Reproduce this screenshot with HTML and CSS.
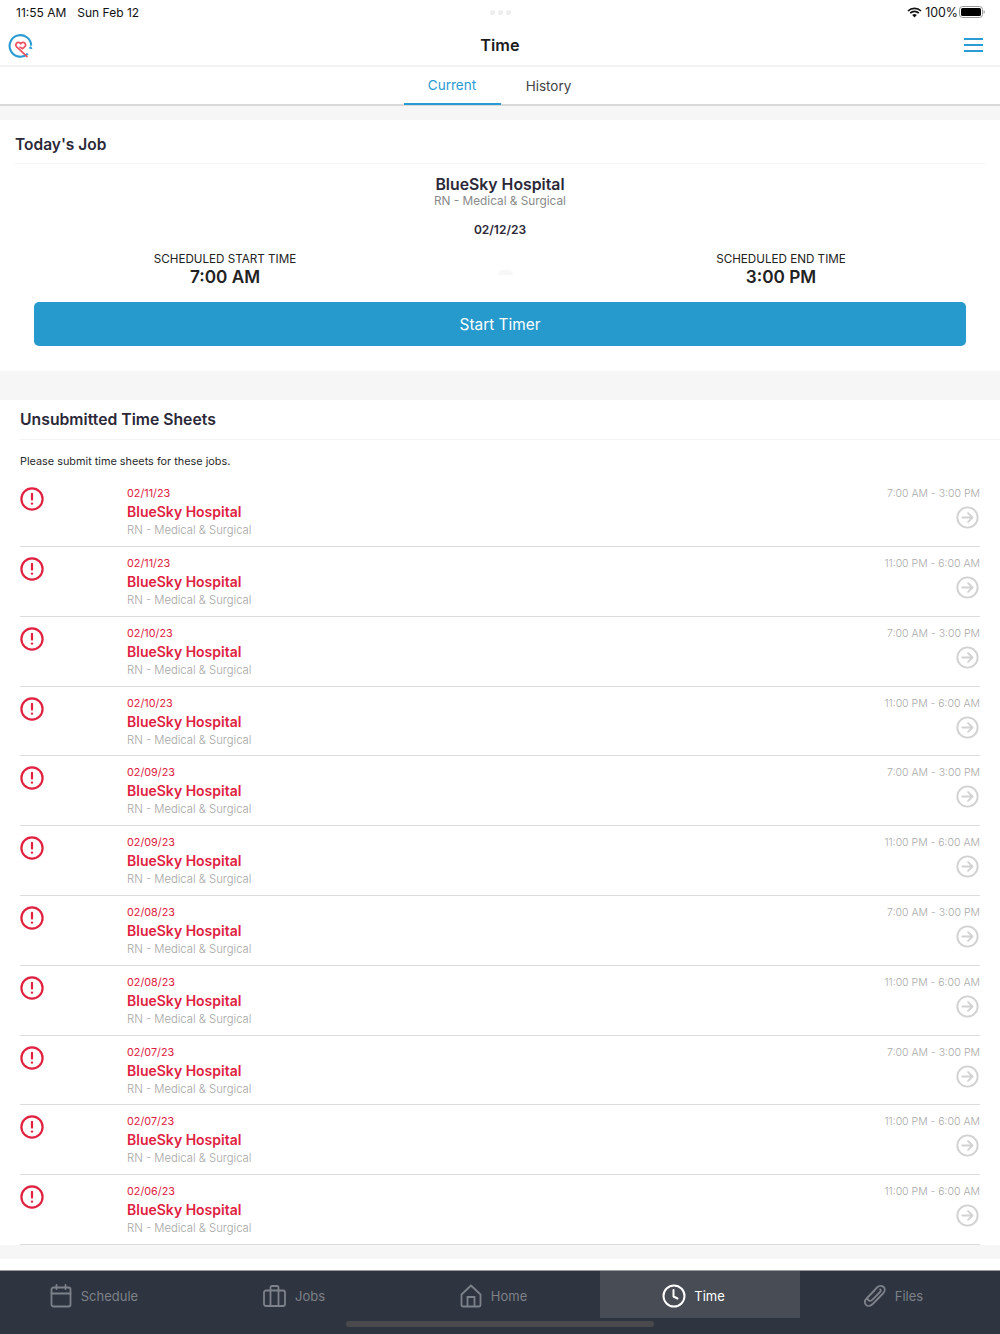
FILE: index.html
```html
<!DOCTYPE html>
<html lang="en">
<head>
<meta charset="utf-8">
<title>Time</title>
<link rel="stylesheet" href="styles.css">
</head>
<body>
<svg class="defs" width="0" height="0" aria-hidden="true">
  <symbol id="alert" viewBox="0 0 24 24"><circle cx="12" cy="12" r="10.6" fill="none" stroke="currentColor" stroke-width="2.2"/><path d="M12 6.8v5.8" fill="none" stroke="currentColor" stroke-width="2.2" stroke-linecap="round"/><circle cx="12" cy="16.6" r="1.2" fill="currentColor"/></symbol>
  <symbol id="go" viewBox="0 0 24 24"><circle cx="12" cy="12" r="10.6" fill="none" stroke="currentColor" stroke-width="2"/><path d="M6.6 12h10.4M12.6 7.4l4.6 4.6-4.6 4.6" fill="none" stroke="currentColor" stroke-width="2" stroke-linecap="round" stroke-linejoin="round"/></symbol>
</svg>
<div class="app">
  <div class="status">
    <div class="status-left"><span>11:55 AM</span><span>Sun Feb 12</span></div>
    <div class="dots"><i></i><i></i><i></i></div>
    <div class="status-right">
      <svg class="wifi" width="15" height="11" viewBox="0 0 15 11"><path d="M1 4a9.2 9.2 0 0 1 13 0M3.2 6.2a6 6 0 0 1 8.6 0" fill="none" stroke="#111" stroke-width="1.7"/><path d="M5.2 8.1a3.2 3.2 0 0 1 4.6 0L7.5 10.6z" fill="#111"/></svg>
      <span class="pct">100%</span>
      <svg width="26" height="12" viewBox="0 0 26 12"><rect x=".5" y=".5" width="23" height="11" rx="3" fill="none" stroke="#999"/><rect x="2" y="2" width="20" height="8" rx="1.6" fill="#000"/><path d="M24.6 4.2c.8.2 1.200.9 1.200 1.800s-.4 1.600-1.200 1.800z" fill="#999"/></svg>
    </div>
  </div>
  <header class="nav">
    <svg class="logo" width="25" height="25" viewBox="0 0 25 25"><path d="M19.800 20.800A10.800 10.800 0 1 1 23.200 12.600" fill="none" stroke="#2b9bd3" stroke-width="2.100"/><path d="M20.300 15.200l2.700-2.200 1.500 3.200z" fill="#2b9bd3"/><path d="M19 23.600l-6.800-6.400-3.600-3.300c-1.700-2-.4-4.500 1.700-4.500 1.100 0 1.900.6 2.400 1.400.5-.8 1.300-1.400 2.400-1.400 2.200 0 3.300 2.600 1.800 4.300l-2.400 2-2.400-1.600" fill="none" stroke="#ef4f5f" stroke-width="1.700" stroke-linecap="round" stroke-linejoin="round"/></svg>
    <h1>Time</h1>
    <div class="burger"><i></i><i></i><i></i></div>
  </header>
  <nav class="tabs">
    <div class="tab active">Current</div>
    <div class="tab">History</div>
  </nav>
  <main>
    <section class="card today">
      <h2 class="title today-title">Today's Job</h2>
      <div class="job">
        <div class="job-name">BlueSky Hospital</div>
        <div class="job-role">RN - Medical &amp; Surgical</div>
        <div class="job-date">02/12/23</div>
      </div>
      <div class="sched">
        <div class="sched-col"><div class="sched-label">SCHEDULED START TIME</div><div class="sched-time">7:00 AM</div></div>
        <div class="sched-mark"></div>
        <div class="sched-col"><div class="sched-label">SCHEDULED END TIME</div><div class="sched-time">3:00 PM</div></div>
      </div>
      <button class="start">Start Timer</button>
    </section>
    <section class="card sheets">
      <h2 class="title sheets-title">Unsubmitted Time Sheets</h2>
      <p class="hint">Please submit time sheets for these jobs.</p>
      <ul class="rows">
        <li class="row"><svg class="alert"><use href="#alert"/></svg><div class="info"><div class="date">02/11/23</div><div class="name">BlueSky Hospital</div><div class="role">RN - Medical &amp; Surgical</div></div><div class="right"><div class="hours">7:00 AM - 3:00 PM</div><svg class="go"><use href="#go"/></svg></div></li>
        <li class="row"><svg class="alert"><use href="#alert"/></svg><div class="info"><div class="date">02/11/23</div><div class="name">BlueSky Hospital</div><div class="role">RN - Medical &amp; Surgical</div></div><div class="right"><div class="hours">11:00 PM - 6:00 AM</div><svg class="go"><use href="#go"/></svg></div></li>
        <li class="row"><svg class="alert"><use href="#alert"/></svg><div class="info"><div class="date">02/10/23</div><div class="name">BlueSky Hospital</div><div class="role">RN - Medical &amp; Surgical</div></div><div class="right"><div class="hours">7:00 AM - 3:00 PM</div><svg class="go"><use href="#go"/></svg></div></li>
        <li class="row"><svg class="alert"><use href="#alert"/></svg><div class="info"><div class="date">02/10/23</div><div class="name">BlueSky Hospital</div><div class="role">RN - Medical &amp; Surgical</div></div><div class="right"><div class="hours">11:00 PM - 6:00 AM</div><svg class="go"><use href="#go"/></svg></div></li>
        <li class="row"><svg class="alert"><use href="#alert"/></svg><div class="info"><div class="date">02/09/23</div><div class="name">BlueSky Hospital</div><div class="role">RN - Medical &amp; Surgical</div></div><div class="right"><div class="hours">7:00 AM - 3:00 PM</div><svg class="go"><use href="#go"/></svg></div></li>
        <li class="row"><svg class="alert"><use href="#alert"/></svg><div class="info"><div class="date">02/09/23</div><div class="name">BlueSky Hospital</div><div class="role">RN - Medical &amp; Surgical</div></div><div class="right"><div class="hours">11:00 PM - 6:00 AM</div><svg class="go"><use href="#go"/></svg></div></li>
        <li class="row"><svg class="alert"><use href="#alert"/></svg><div class="info"><div class="date">02/08/23</div><div class="name">BlueSky Hospital</div><div class="role">RN - Medical &amp; Surgical</div></div><div class="right"><div class="hours">7:00 AM - 3:00 PM</div><svg class="go"><use href="#go"/></svg></div></li>
        <li class="row"><svg class="alert"><use href="#alert"/></svg><div class="info"><div class="date">02/08/23</div><div class="name">BlueSky Hospital</div><div class="role">RN - Medical &amp; Surgical</div></div><div class="right"><div class="hours">11:00 PM - 6:00 AM</div><svg class="go"><use href="#go"/></svg></div></li>
        <li class="row"><svg class="alert"><use href="#alert"/></svg><div class="info"><div class="date">02/07/23</div><div class="name">BlueSky Hospital</div><div class="role">RN - Medical &amp; Surgical</div></div><div class="right"><div class="hours">7:00 AM - 3:00 PM</div><svg class="go"><use href="#go"/></svg></div></li>
        <li class="row"><svg class="alert"><use href="#alert"/></svg><div class="info"><div class="date">02/07/23</div><div class="name">BlueSky Hospital</div><div class="role">RN - Medical &amp; Surgical</div></div><div class="right"><div class="hours">11:00 PM - 6:00 AM</div><svg class="go"><use href="#go"/></svg></div></li>
        <li class="row"><svg class="alert"><use href="#alert"/></svg><div class="info"><div class="date">02/06/23</div><div class="name">BlueSky Hospital</div><div class="role">RN - Medical &amp; Surgical</div></div><div class="right"><div class="hours">11:00 PM - 6:00 AM</div><svg class="go"><use href="#go"/></svg></div></li>
      </ul>
    </section>
  </main>
  <footer class="bar">
    <div class="item"><svg width="22" height="24" viewBox="0 0 22 24" fill="none" stroke="currentColor" stroke-width="1.800"><rect x="1.500" y="3.500" width="19" height="19" rx="2"/><path d="M1.500 9.500h19M6.500 1v4M15.500 1v4" stroke-linecap="round"/></svg><span>Schedule</span></div>
    <div class="item"><svg width="23" height="22" viewBox="0 0 23 22" fill="none" stroke="currentColor" stroke-width="1.800"><rect x="1" y="5.500" width="21" height="15.500" rx="2"/><path d="M7.500 5.500V2.500a1.500 1.500 0 0 1 1.500-1.500h5a1.500 1.500 0 0 1 1.500 1.500v3M7.500 5.500V21M15.500 5.500V21"/></svg><span>Jobs</span></div>
    <div class="item"><svg width="22" height="24" viewBox="0 0 22 24" fill="none" stroke="currentColor" stroke-width="1.800"><path d="M1.500 10.500L11 1.500l9.500 9V21a1.500 1.500 0 0 1-1.500 1.500H3A1.500 1.500 0 0 1 1.500 21z" stroke-linejoin="round"/><path d="M7.500 22.500V13h7v9.500"/></svg><span>Home</span></div>
    <div class="item current"><svg width="24" height="24" viewBox="0 0 24 24" fill="none" stroke="currentColor" stroke-width="2"><circle cx="12" cy="12" r="10.500"/><path d="M11.500 6v6.500l4 2" stroke-linecap="round" stroke-linejoin="round"/></svg><span>Time</span></div>
    <div class="item"><svg width="23" height="24" viewBox="0 0 23 24" fill="none" stroke="currentColor" stroke-width="1.800" stroke-linecap="round" stroke-linejoin="round"><path d="M11.500 6.500L4 14c-2.500 2.500-2.500 5.200-1 6.800 1.600 1.600 4.300 1.600 6.700-.8L20 9.500c2.300-2.300 2.100-5 .6-6.500S16.300 1.200 14 3.500L5.800 12c-1.500 1.500-1.500 3.200-.5 4.200s2.700 1 4.200-.5l7.500-7.700c.9-.9.900-2 .2-2.700"/></svg><span>Files</span></div>
    <div class="home-ind"></div>
  </footer>
</div>
</body>
</html>
```
FILE: styles.css
```css
* { box-sizing: border-box; }
html, body { margin: 0; padding: 0; }
body { font-family: Inter, "Liberation Sans", sans-serif; background: #fff; color: #2b2838; }
.defs { position: absolute; }
.app { width: 1000px; height: 1334px; display: flex; flex-direction: column; overflow: hidden; }
.status { height: 24px; display: flex; align-items: center; justify-content: space-between; padding: 0 15px 0 16px; font-size: 12px; color: #111; position: relative; }
.status-left { display: flex; gap: 11px; }
.status-right { display: flex; align-items: center; gap: 3px; font-size: 12.400px; }
.pct { margin-right: -2px; }
.dots { display: flex; gap: 3px; position: absolute; left: 490px; top: 10px; }
.dots i { width: 5px; height: 5px; border-radius: 50%; background: #eee; }
.nav { height: 43px; display: flex; align-items: center; justify-content: center; border-bottom: 2px solid #f3f3f3; position: relative; }
.nav h1 { margin: 0; font-size: 16.300px; font-weight: 600; color: #1c1c1e; }
.logo { position: absolute; left: 8px; top: 9px; }
.burger { position: absolute; right: 17px; top: 14px; width: 19px; display: flex; flex-direction: column; gap: 4px; }
.burger i { display: block; height: 2px; background: #2b9bd3; }
.tabs { height: 39px; display: flex; justify-content: center; border-bottom: 2px solid #d9d9d9; }
.tab { width: 96px; display: flex; align-items: center; justify-content: center; font-size: 13.500px; color: #444; height: 38px; }
.tab.active { width: 97px; color: #2b9bd3; border-bottom: 2px solid #2b9bd3; padding-bottom: 1px; }
main { flex: none; background: #f6f6f6; padding: 14px 0; display: flex; flex-direction: column; gap: 29px; }
.card { background: #fff; }
.today { height: 251px; padding: 0 15px; display: flex; flex-direction: column; }
.title { margin: 0; font-weight: 600; color: #2b2838; border-bottom: 1px solid #f5f5f5; }
.today-title { font-size: 15.500px; height: 44px; line-height: 49px; }
.job { text-align: center; padding-top: 11px; }
.job-name { font-size: 15.800px; font-weight: 600; line-height: 19px; }
.job-role { font-size: 11.800px; color: #8a8a8a; line-height: 14px; }
.job-date { font-size: 12px; font-weight: 600; line-height: 15px; margin-top: 14px; }
.sched { display: flex; justify-content: center; margin-top: 15px; position: relative; left: 3px; }
.sched-col { width: 278px; text-align: center; }
.sched-mark { position: absolute; left: 480px; top: 18px; width: 15px; height: 5px; border-radius: 6px 6px 0 0; background: #f7f7f7; }
.sched-col:first-child { margin-right: 278px; }
.sched-label { font-size: 11.650px; line-height: 15px; color: #222; }
.sched-time { font-size: 17.200px; font-weight: 600; line-height: 20px; color: #222; }
.start { display: block; margin: 15px 19.300px 0; height: 44px; width: 931.500px; border: 0; border-radius: 5px; background: #2699cd; color: #fff; font: 400 15.400px Inter, "Liberation Sans", sans-serif; }
.sheets { height: 845px; padding-left: 20px; }
.sheets-title { font-size: 15.750px; height: 40px; line-height: 39px; border-bottom-color: #f3f3f3; }
.hint { margin: 14px 0 0; font-size: 10.860px; line-height: 14px; color: #2b2b2b; }
.rows { list-style: none; margin: 9.300px 20px 0 0; padding: 0; }
.row { height: 69.800px; display: flex; border-bottom: 1px solid #dcdcdc; padding-top: 9px; }
.alert { width: 24px; height: 24px; color: #e0213f; flex: none; margin-top: 1px; }
.info { margin-left: 83px; flex: 1; padding-top: 1px; }
.date { font-size: 10.800px; line-height: 14px; color: #e0213f; }
.name { font-size: 14px; font-weight: 600; line-height: 18px; color: #e0213f; margin-top: 2px; }
.role { font-size: 11.300px; line-height: 14px; color: #a6a6a6; font-weight: 300; margin-top: 2px; }
.right { display: flex; flex-direction: column; align-items: flex-end; padding-top: 1px; }
.hours { font-size: 10.500px; line-height: 14px; color: #aaa; font-weight: 300; }
.go { width: 23px; height: 23px; margin: 5px 1px 0 0; color: #d2d2d2; }
.bar { position: relative; margin-top: auto; height: 64px; background: #2f3540; border-top: 1px solid #999; display: flex; }
.item { width: 200px; height: 47px; display: flex; align-items: center; justify-content: center; gap: 9px; color: #7d8189; font-size: 13px; padding-top: 2px; }
.item:nth-child(1), .item:nth-child(2) { padding-right: 12px; }
.item:nth-child(3) { padding-right: 13px; }
.item:nth-child(4), .item:nth-child(5) { padding-right: 14px; }
.item.current { background: #484c55; color: #fff; gap: 8px; padding-right: 13px; }
.home-ind { position: absolute; left: 346px; top: 50px; width: 308px; height: 6px; border-radius: 3px; background: #4a4a4c; }
```
